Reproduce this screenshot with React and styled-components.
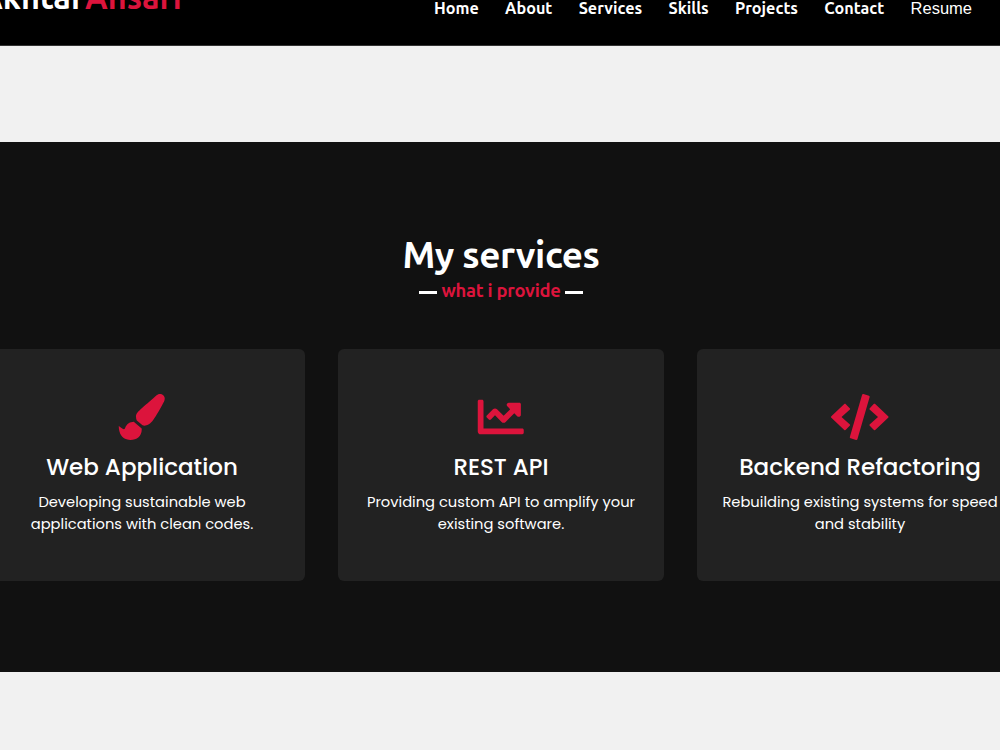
import styled, { createGlobalStyle } from "styled-components";
import { FaChartLine, FaCode, FaPaintBrush } from "react-icons/fa";

const links = ["Home", "About", "Services", "Skills", "Projects", "Contact"];

const services = [
  {
    title: "Web Application",
    icon: <FaPaintBrush />,
    text: "Developing sustainable web applications with clean codes.",
  },
  {
    title: "REST API",
    icon: <FaChartLine />,
    text: "Providing custom API to amplify your existing software.",
  },
  {
    title: "Backend Refactoring",
    icon: <FaCode />,
    text: "Rebuilding existing systems for speed and stability",
  },
];

function App() {
  return (
    <Page>
      <GlobalStyle />
      <Navbar>
        <Logo>
          Akhtar <span>Ansari</span>
        </Logo>
        <Menu>
          {links.map((link) => (
            <MenuLink key={link}>{link}</MenuLink>
          ))}
          <ResumeButton>Resume</ResumeButton>
        </Menu>
      </Navbar>
      <Services>
        <Title>My services</Title>
        <Subtitle>
          <Dash />
          what i provide
          <Dash />
        </Subtitle>
        <Cards>
          {services.map((service) => (
            <Card key={service.title}>
              <Icon>{service.icon}</Icon>
              <CardTitle>{service.title}</CardTitle>
              <CardText>{service.text}</CardText>
            </Card>
          ))}
        </Cards>
      </Services>
    </Page>
  );
}

const GlobalStyle = createGlobalStyle`
  * {
    margin: 0;
    padding: 0;
    box-sizing: border-box;
  }
  body {
    background: #f1f1f1;
    overflow: hidden;
  }
`;

const Page = styled.div`
  width: 1000px;
  height: 750px;
  overflow: hidden;
  font-family: Ubuntu, "Noto Sans", sans-serif;
  color: #fff;
`;

const Navbar = styled.nav`
  height: 46px;
  display: flex;
  align-items: flex-start;
  justify-content: space-between;
  padding-right: 28px;
  background: #000;
  border-bottom: 1px solid #333;
  overflow: hidden;
`;

const Logo = styled.div`
  margin: -24px 0 0 -20px;
  font-size: 32.4px;
  line-height: 42px;
  font-weight: 700;
  white-space: nowrap;
  word-spacing: -7px;
  span {
    color: crimson;
  }
`;

const Menu = styled.div`
  display: flex;
  gap: 26.3px;
  margin-top: -4px;
  line-height: 24px;
`;

const MenuLink = styled.a`
  font-size: 16.2px;
  font-weight: 700;
  letter-spacing: 0.01px;
  white-space: nowrap;
`;

const ResumeButton = styled.button`
  border: none;
  background: none;
  color: #fff;
  font-family: "Liberation Sans", Arial, sans-serif;
  font-size: 16.5px;
  line-height: 23px;
`;

const Services = styled.section`
  height: 530px;
  margin-top: 96px;
  padding: 88px 0 0 2px;
  display: flex;
  flex-direction: column;
  align-items: center;
  background: #111;
`;

const Title = styled.h2`
  font-size: 36.8px;
  line-height: 50px;
  font-weight: 700;
  letter-spacing: -0.4px;
`;

const Subtitle = styled.div`
  display: flex;
  align-items: center;
  gap: 4px;
  font-size: 18.4px;
  line-height: 20px;
  font-weight: 700;
  letter-spacing: -0.25px;
  color: crimson;
`;

const Dash = styled.span`
  width: 18px;
  height: 3px;
  margin-top: 4px;
  background: #fff;
`;

const Cards = styled.div`
  display: flex;
  gap: 33px;
  margin-top: 49px;
`;

const Card = styled.div`
  width: 326px;
  height: 232px;
  padding: 45px 23px 0;
  flex-shrink: 0;
  background: #222;
  border-radius: 6px;
  font-family: Poppins, Inter, sans-serif;
  text-align: center;
`;

const Icon = styled.div`
  height: 46px;
  display: flex;
  justify-content: center;
  color: crimson;
  font-size: 46px;
  svg {
    width: 1.25em;
  }
`;

const CardTitle = styled.h3`
  margin: 10px 0 6px;
  font-size: 23px;
  line-height: 35px;
  font-weight: 500;
  white-space: nowrap;
`;

const CardText = styled.p`
  font-size: 14.7px;
  line-height: 22px;
`;

export default App;
